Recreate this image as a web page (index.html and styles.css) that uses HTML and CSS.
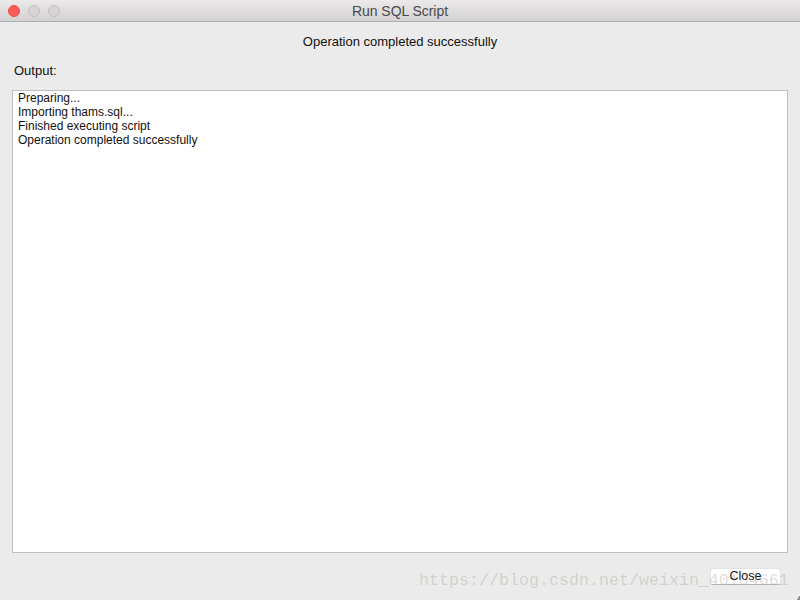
FILE: index.html
```html
<!DOCTYPE html>
<html lang="en">
<head>
<meta charset="utf-8">
<title>Run SQL Script</title>
<link rel="stylesheet" href="styles.css">
</head>
<body>
<div class="window">
  <header class="titlebar">
    <div class="lights">
      <span class="light light-close"></span>
      <span class="light"></span>
      <span class="light"></span>
    </div>
    <div class="title">Run SQL Script</div>
  </header>
  <main class="content">
    <div class="status">Operation completed successfully</div>
    <div class="label">Output:</div>
    <div class="output">
      <div>Preparing...</div>
      <div>Importing thams.sql...</div>
      <div>Finished executing script</div>
      <div>Operation completed successfully</div>
    </div>
    <div class="footer">
      <button class="close">Close</button>
    </div>
  </main>
  <div class="watermark">https://blog.csdn.net/weixin_40104661</div>
  <div class="corner"></div>
</div>
</body>
</html>
```
FILE: styles.css
```css
* { box-sizing: border-box; }
html, body { margin: 0; padding: 0; }
body {
  width: 800px;
  height: 600px;
  overflow: hidden;
  background: #ebebeb;
  font-family: "Liberation Sans", Arial, sans-serif;
  font-size: 12px;
  color: #111;
}
.window {
  position: relative;
  width: 800px;
  height: 600px;
  display: flex;
  flex-direction: column;
}
.titlebar {
  position: relative;
  flex: none;
  height: 22px;
  background: linear-gradient(#ebe9ea, #d3d1d2);
  border-bottom: 1px solid #aeaeae;
  display: flex;
  align-items: center;
  justify-content: center;
}
.lights {
  position: absolute;
  left: 8px;
  top: 5px;
  display: flex;
  gap: 8px;
}
.light {
  width: 12px;
  height: 12px;
  border-radius: 50%;
  background: #d6d4d5;
  border: 1px solid #c2c0c1;
}
.light-close {
  background: #fc5b57;
  border-color: #e9504c;
}
.title {
  font-size: 14px;
  letter-spacing: -0.05px;
  color: #4a4a4a;
}
.content {
  flex: 1;
  display: flex;
  flex-direction: column;
  padding: 0 12px;
  min-height: 0;
}
.status {
  flex: none;
  height: 14px;
  margin-top: 13px;
  line-height: 14px;
  font-size: 13px;
  text-align: center;
}
.label {
  flex: none;
  margin: 15px 0 0 2px;
  height: 14px;
  line-height: 14px;
  font-size: 13px;
}
.output {
  flex: none;
  height: 463px;
  margin-top: 12px;
  width: 776px;
  background: #fff;
  border: 1px solid #bfbfbf;
  padding: 0 5px;
  line-height: 14px;
}
.footer {
  flex: none;
  display: flex;
  justify-content: flex-end;
  margin-top: 15px;
  padding-right: 7px;
}
.close {
  width: 71px;
  height: 17px;
  padding: 0;
  font: inherit;
  font-size: 12.5px;
  line-height: 15px;
  color: #111;
  background: #fff;
  border: 1px solid #e2e2e2;
  border-bottom-color: #b5b5b5;
  border-radius: 3px;
}
.watermark {
  position: absolute;
  left: 419px;
  top: 570px;
  font-family: "Liberation Mono", "DejaVu Sans Mono", monospace;
  font-size: 16.67px;
  line-height: 22px;
  white-space: nowrap;
  color: rgba(150, 150, 140, 0.32);
  pointer-events: none;
}
.corner {
  position: absolute;
  right: 0;
  bottom: 0;
  width: 4px;
  height: 4px;
  background: linear-gradient(135deg, transparent 50%, #8f8f8f 50%);
}
```
